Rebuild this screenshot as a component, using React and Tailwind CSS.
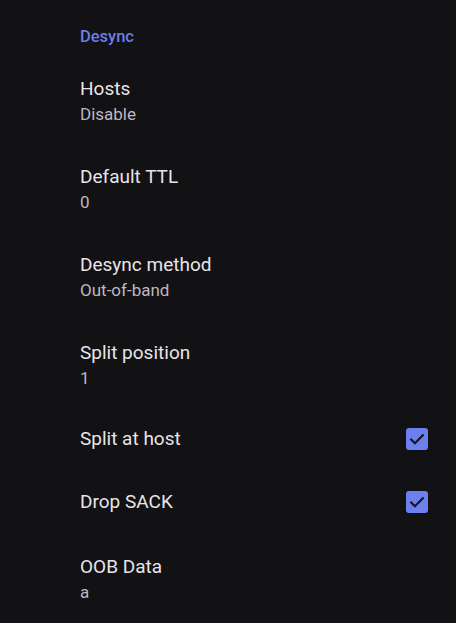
import React from 'react';

const Item = ({ title, summary, checked }) => {
  if (summary !== undefined) {
    return (
      <div className="h-[88px] pl-[80px] pr-[28px] pt-[19px]">
        <div className="text-[19px] leading-[24px] text-[#e8e4ea]">{title}</div>
        <div className="text-[17px] leading-[26px] text-[#bdb8c0]">{summary}</div>
      </div>
    );
  }
  return (
    <div className="h-[63px] pl-[80px] pr-[28px] pb-[5px] flex items-center justify-between">
      <div className="text-[19px] leading-[24px] text-[#e8e4ea]">{title}</div>
      {checked && (
        <div className="w-[22px] h-[22px] rounded-[3px] bg-[#6d80f0] flex items-center justify-center">
          <svg width="20" height="20" viewBox="0 0 24 24" fill="none" stroke="#16161f" strokeWidth="2.6" strokeLinecap="square">
            <path d="M5 12.5l4.5 4.5L19 7.5" />
          </svg>
        </div>
      )}
    </div>
  );
};

export default function App() {
  return (
    <div className="w-[456px] h-[623px] bg-[#121113] overflow-hidden font-['Roboto',_'Noto_Sans',_sans-serif]">
      <div className="h-[58px] pl-[80px] pt-[27px]">
        <div className="text-[16.5px] leading-[20px] font-medium text-[#6b7ee8]">Desync</div>
      </div>
      <Item title="Hosts" summary="Disable" />
      <Item title="Default TTL" summary="0" />
      <Item title="Desync method" summary="Out-of-band" />
      <Item title="Split position" summary="1" />
      <Item title="Split at host" checked />
      <Item title="Drop SACK" checked />
      <Item title="OOB Data" summary="a" />
    </div>
  );
}
